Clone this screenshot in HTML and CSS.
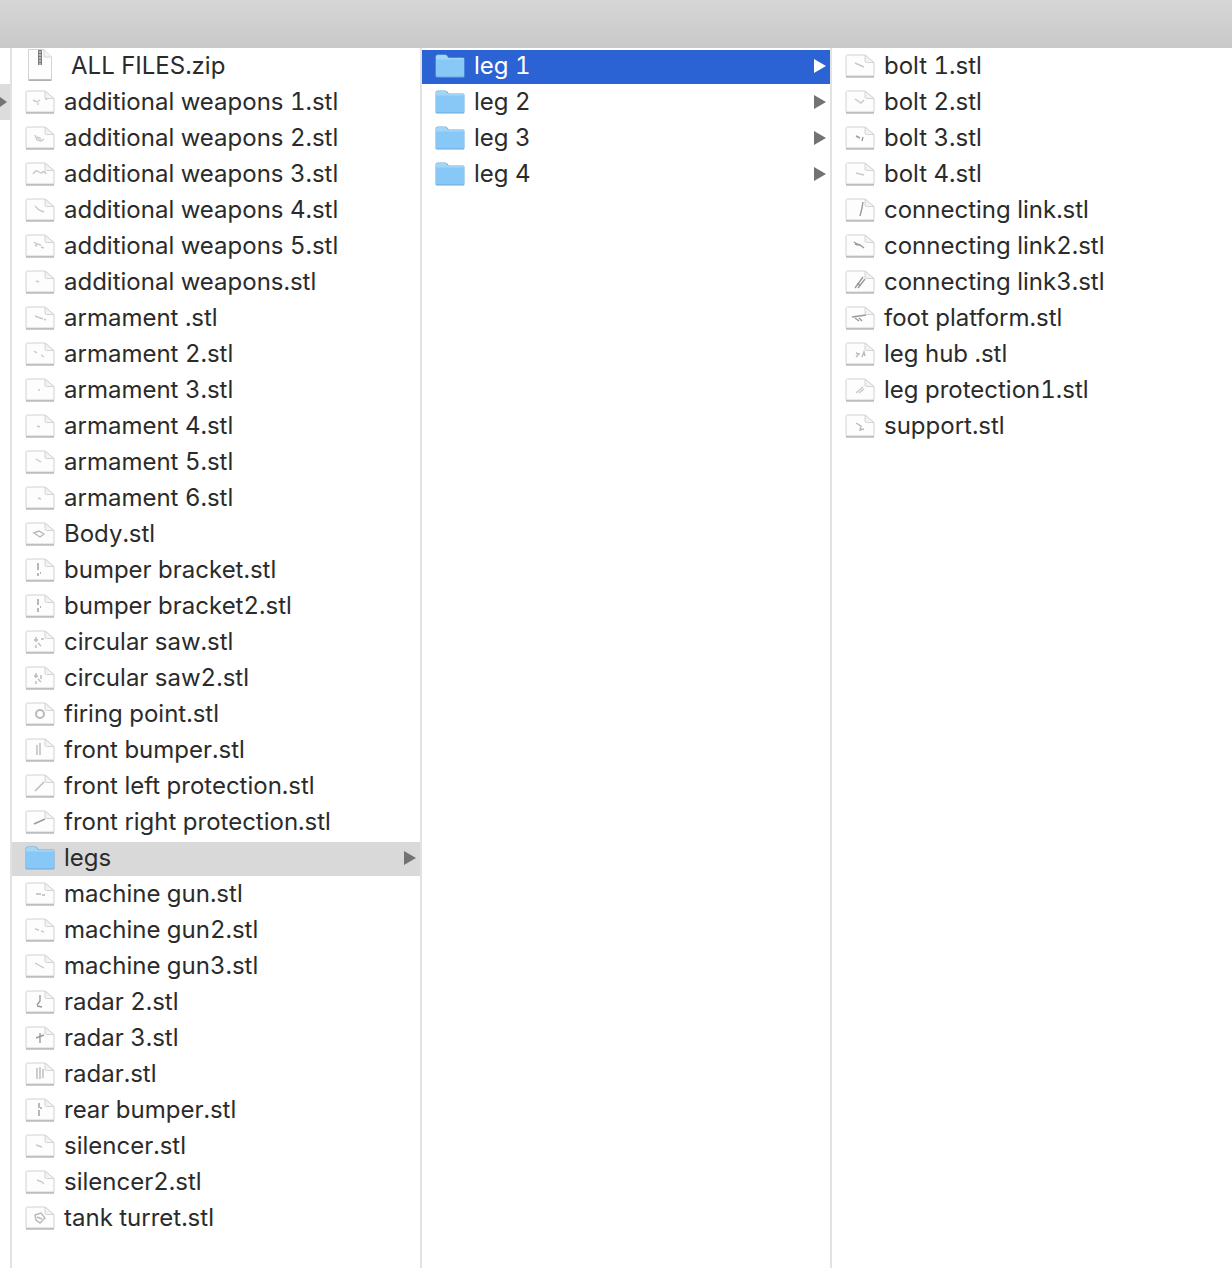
FILE: index.html
```html
<!DOCTYPE html>
<html lang="en">
    <head>
        <meta charset="UTF-8">
        <title>Finder columns</title>
        <link rel="stylesheet" href="styles.css">
    </head>
    <body>
        <svg class="defs" width="0" height="0">
            <symbol id="file" viewBox="0 0 30 24">
                <path d="M1 22.6 H29" stroke="#8f8f8f" stroke-width="2" opacity="0.75"/>
                <path d="M1 2.5 Q1 1 2.5 1 H20 L29 8.5 V21 Q29 22 28 22 H2 Q1 22 1 21 Z" fill="#fdfdfd" stroke="#d2d2d2"/>
                <path d="M20 1 V7 Q20 8.5 21.5 8.5 H29 Z" fill="#f3f3f3" stroke="#d4d4d4"/>
            </symbol>
            <symbol id="folder" viewBox="0 0 30 24">
                <path d="M0.5 3 Q0.5 0.5 3 0.5 H10 Q12 0.5 13 2.5 L13.6 3.5 H28 Q29.5 3.5 29.5 5 V22 Q29.5 23.5 28 23.5 H2 Q0.5 23.5 0.5 22 Z" fill="#6aa9da"/>
                <path d="M1 2.8 Q1 1 3 1 H10 Q11.5 1 12.5 3 L13 4 H28 Q29 4 29 5 V6 H1 Z" fill="#a3d5f7"/>
                <path d="M1 5.5 H29 V21.5 Q29 22.6 28 22.6 H2 Q1 22.6 1 21.5 Z" fill="#88c8f6"/>
            </symbol>
        </svg>

        <div class="toolbar"></div>

        <div class="columns">
            <div class="stub">
                <div class="stub-mark"><span class="arrow arrow-stub"></span></div>
            </div>

            <div class="column">
                <div class="row row-zip">
                    <svg class="zip" viewBox="0 0 24 32">
                        <path d="M0.5 0.5 H16 L23.5 8 V30.5 H0.5 Z" fill="#fdfdfd" stroke="#d4d4d4"/>
                        <path d="M16 0.5 V8 H23.5" fill="#f2f2f2" stroke="#d6d6d6"/>
                        <path d="M0.5 31.2 H23.5" stroke="#a8a8a8" stroke-width="1.4"/>
                        <path d="M10 1 H14 V16 H10 Z" fill="#7d7d7d"/>
                        <path d="M11 3 H13 M11 6 H13 M11 9 H13 M11 12 H13 M11 15 H13" stroke="#eeeeee"/>
                    </svg>
                    <span class="name">ALL FILES.zip</span>
                </div>
                <div class="row"><svg class="icon"><use href="#file"/><path class="mark" d="M8 10l4 2 3-2M13 13v2M20 8l2 2"/></svg><span class="name">additional weapons 1.stl</span></div>
                <div class="row"><svg class="icon"><use href="#file"/><path class="mark" d="M10 9l2 5 4 1 3-2M12 11l4 2"/></svg><span class="name">additional weapons 2.stl</span></div>
                <div class="row"><svg class="icon"><use href="#file"/><path class="mark" d="M8 12q3-5 6-2 3 2 5-1M19 9l2 3"/></svg><span class="name">additional weapons 3.stl</span></div>
                <div class="row"><svg class="icon"><use href="#file"/><path class="mark" d="M10 8l4 4 5 2"/></svg><span class="name">additional weapons 4.stl</span></div>
                <div class="row"><svg class="icon"><use href="#file"/><path class="mark" d="M9 8l3 2 4 1M10 11l2 1M16 13l3 1"/></svg><span class="name">additional weapons 5.stl</span></div>
                <div class="row"><svg class="icon"><use href="#file"/><path class="mark" d="M11 11l3 1"/></svg><span class="name">additional weapons.stl</span></div>
                <div class="row"><svg class="icon"><use href="#file"/><path class="mark" d="M10 10l8 3M19 13l2 1"/></svg><span class="name">armament .stl</span></div>
                <div class="row"><svg class="icon"><use href="#file"/><path class="mark" d="M9 9l3 2M16 13l3 2"/></svg><span class="name">armament 2.stl</span></div>
                <div class="row"><svg class="icon"><use href="#file"/><path class="mark" d="M13 12h2"/></svg><span class="name">armament 3.stl</span></div>
                <div class="row"><svg class="icon"><use href="#file"/><path class="mark" d="M12 12l3 1"/></svg><span class="name">armament 4.stl</span></div>
                <div class="row"><svg class="icon"><use href="#file"/><path class="mark" d="M11 9l5 3"/></svg><span class="name">armament 5.stl</span></div>
                <div class="row"><svg class="icon"><use href="#file"/><path class="mark" d="M13 12l3 1"/></svg><span class="name">armament 6.stl</span></div>
                <div class="row"><svg class="icon"><use href="#file"/><path class="mark-heavy" d="M9 11l5-2 5 3-4 3z"/></svg><span class="name">Body.stl</span></div>
                <div class="row"><svg class="icon"><use href="#file"/><path class="mark-dark" d="M13 5v7M13 15v3M15 15h1"/></svg><span class="name">bumper bracket.stl</span></div>
                <div class="row"><svg class="icon"><use href="#file"/><path class="mark-dark" d="M13 5v6M13 14v4M15 13h1"/></svg><span class="name">bumper bracket2.stl</span></div>
                <div class="row"><svg class="icon"><use href="#file"/><path class="mark-heavy" d="M11 7v5M9 10h4M13 13l3 3M11 15v3M16 9h3"/></svg><span class="name">circular saw.stl</span></div>
                <div class="row"><svg class="icon"><use href="#file"/><path class="mark-heavy" d="M11 7v5M9 10h4M13 13l3 3M11 15v3M16 9v4"/></svg><span class="name">circular saw2.stl</span></div>
                <div class="row"><svg class="icon"><use href="#file"/><circle class="mark-heavy" cx="15" cy="12" r="4"/></svg><span class="name">firing point.stl</span></div>
                <div class="row"><svg class="icon"><use href="#file"/><path class="mark-heavy" d="M12 7v10M15 5v12"/></svg><span class="name">front bumper.stl</span></div>
                <div class="row"><svg class="icon"><use href="#file"/><path class="mark-heavy" d="M10 17l9-9"/></svg><span class="name">front left protection.stl</span></div>
                <div class="row"><svg class="icon"><use href="#file"/><path class="mark-dark" d="M9 14l11-5"/></svg><span class="name">front right protection.stl</span></div>
                <div class="row row-open"><svg class="icon"><use href="#folder"/></svg><span class="name">legs</span><span class="arrow"></span></div>
                <div class="row"><svg class="icon"><use href="#file"/><path class="mark-heavy" d="M11 12h5M17 13h3"/></svg><span class="name">machine gun.stl</span></div>
                <div class="row"><svg class="icon"><use href="#file"/><path class="mark" d="M10 11l4 1M16 13l3 1"/></svg><span class="name">machine gun2.stl</span></div>
                <div class="row"><svg class="icon"><use href="#file"/><path class="mark" d="M10 9l9 5"/></svg><span class="name">machine gun3.stl</span></div>
                <div class="row"><svg class="icon"><use href="#file"/><path class="mark-dark" d="M15 5v6l-3 4M12 16l5 1"/></svg><span class="name">radar 2.stl</span></div>
                <div class="row"><svg class="icon"><use href="#file"/><path class="mark-dark" d="M11 12l8-3M15 7v10"/></svg><span class="name">radar 3.stl</span></div>
                <div class="row"><svg class="icon"><use href="#file"/><path class="mark-heavy" d="M12 6v11M15 5v12M18 7v9"/></svg><span class="name">radar.stl</span></div>
                <div class="row"><svg class="icon"><use href="#file"/><path class="mark-dark" d="M14 5v5M14 12v6M16 9v2"/></svg><span class="name">rear bumper.stl</span></div>
                <div class="row"><svg class="icon"><use href="#file"/><path class="mark" d="M11 11l6 2"/></svg><span class="name">silencer.stl</span></div>
                <div class="row"><svg class="icon"><use href="#file"/><path class="mark" d="M12 10l5 2 2 2"/></svg><span class="name">silencer2.stl</span></div>
                <div class="row"><svg class="icon"><use href="#file"/><path class="mark-heavy" d="M10 9l6-2 4 5-5 5-4-3zM12 11l5 2"/></svg><span class="name">tank turret.stl</span></div>
            </div>

            <div class="column">
                <div class="row row-selected"><svg class="icon"><use href="#folder"/></svg><span class="name">leg 1</span><span class="arrow"></span></div>
                <div class="row"><svg class="icon"><use href="#folder"/></svg><span class="name">leg 2</span><span class="arrow"></span></div>
                <div class="row"><svg class="icon"><use href="#folder"/></svg><span class="name">leg 3</span><span class="arrow"></span></div>
                <div class="row"><svg class="icon"><use href="#folder"/></svg><span class="name">leg 4</span><span class="arrow"></span></div>
            </div>

            <div class="column">
                <div class="row"><svg class="icon"><use href="#file"/><path class="mark" d="M10 9l9 4"/></svg><span class="name">bolt 1.stl</span></div>
                <div class="row"><svg class="icon"><use href="#file"/><path class="mark" d="M10 9l6 4 3-3"/></svg><span class="name">bolt 2.stl</span></div>
                <div class="row"><svg class="icon"><use href="#file"/><path class="mark-dark" d="M11 10l4 2M18 11l-1 4"/></svg><span class="name">bolt 3.stl</span></div>
                <div class="row"><svg class="icon"><use href="#file"/><path class="mark" d="M11 11l8 2"/></svg><span class="name">bolt 4.stl</span></div>
                <div class="row"><svg class="icon"><use href="#file"/><path class="mark-dark" d="M18 4l-1 6-2 8"/></svg><span class="name">connecting link.stl</span></div>
                <div class="row"><svg class="icon"><use href="#file"/><path class="mark-dark" d="M9 8l3 2 3 1 4 3M10 10l3 1"/></svg><span class="name">connecting link2.stl</span></div>
                <div class="row"><svg class="icon"><use href="#file"/><path class="mark-dark" d="M10 18l8-11M13 18l7-9M12 14l4 1"/></svg><span class="name">connecting link3.stl</span></div>
                <div class="row"><svg class="icon"><use href="#file"/><path class="mark-dark" d="M7 11l14-2M10 12l4 3M14 12l3 3"/></svg><span class="name">foot platform.stl</span></div>
                <div class="row"><svg class="icon"><use href="#file"/><path class="mark-heavy" d="M11 11l3 1-3 3M17 15l2-5 1 4"/></svg><span class="name">leg hub .stl</span></div>
                <div class="row"><svg class="icon"><use href="#file"/><path class="mark" d="M11 15l7-6M14 15l5-4"/></svg><span class="name">leg protection1.stl</span></div>
                <div class="row"><svg class="icon"><use href="#file"/><path class="mark-heavy" d="M11 9l5 3-1 4 4-1"/></svg><span class="name">support.stl</span></div>
            </div>
        </div>
    </body>
</html>
```
FILE: styles.css
```css
html, body {
    margin: 0;
    height: 100%;
    overflow: hidden;
    background: #ffffff;
}

body {
    display: flex;
    flex-direction: column;
    font-family: "Inter", "Liberation Sans", sans-serif;
    font-size: 24px;
    font-variant-numeric: tabular-nums;
    color: #2b2b2b;
}

.defs {
    position: absolute;
}

.toolbar {
    height: 48px;
    flex: none;
    background: linear-gradient(#d6d6d6, #c9c9c9);
}

.columns {
    flex: 1;
    display: grid;
    grid-template-columns: 10px 410px 410px 1fr;
    min-height: 0;
}

.stub {
    padding-top: 36px;
}

.stub-mark {
    height: 36px;
    background: #dcdcdc;
    display: flex;
    align-items: center;
}

.column {
    border-left: 2px solid #e2e2e2;
}

.row {
    height: 34px;
    margin-top: 2px;
    display: flex;
    align-items: center;
    padding-left: 13px;
    position: relative;
}

.row-selected {
    background: #2b63d4;
    color: #ffffff;
}

.row-open {
    background: #d9d9d9;
}

.icon {
    width: 30px;
    height: 24px;
    flex: none;
    margin-bottom: 2px;
    filter: blur(0.35px);
}

.zip {
    width: 24px;
    height: 32px;
    flex: none;
    margin-left: 3px;
    margin-bottom: 4px;
}

.name {
    margin-left: 9px;
    margin-bottom: 4px;
    white-space: nowrap;
}

.row-zip .name {
    margin-left: 19px;
}

.mark, .mark-heavy, .mark-dark {
    fill: none;
    stroke-width: 1.4;
}

.mark {
    stroke: #c9c9c9;
}

.mark-heavy {
    stroke: #b9b9b9;
}

.mark-dark {
    stroke: #9a9a9a;
}

circle.mark-heavy {
    stroke-width: 2;
}

.arrow {
    position: absolute;
    right: 4px;
    top: 9px;
    width: 0;
    height: 0;
    border-left: 12px solid #737373;
    border-top: 7px solid transparent;
    border-bottom: 7px solid transparent;
}

.row-selected .arrow {
    border-left-color: #ffffff;
}

.arrow-stub {
    position: static;
    border-left-width: 7px;
    border-top-width: 5px;
    border-bottom-width: 5px;
}
```
